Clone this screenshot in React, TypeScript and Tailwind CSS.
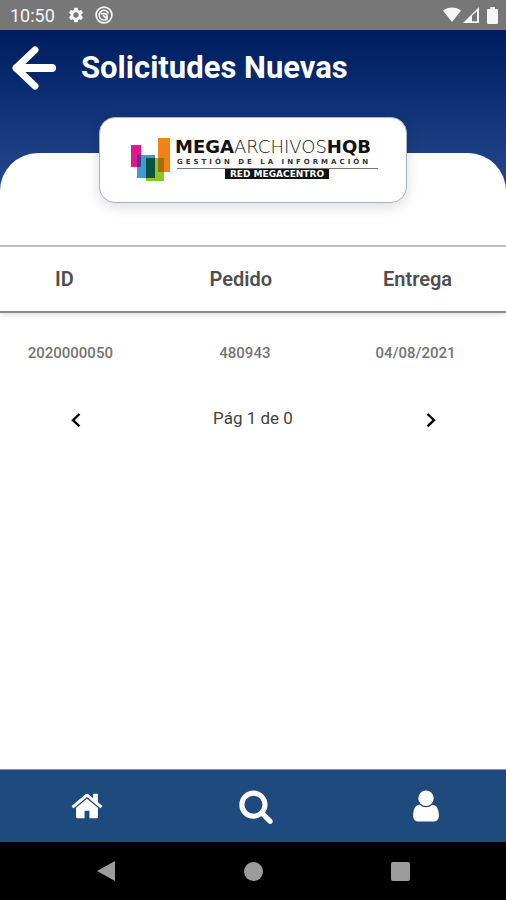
import React from "react";

const requests = [{ id: "2020000050", order: "480943", delivery: "04/08/2021" }];

function StatusBar() {
  return (
    <div className="flex h-[30px] items-center bg-[#777777] pl-2.5 pr-2 text-[#f6f6f6]">
      <span className="pt-0.5 text-[18px] leading-5">10:50</span>
      <svg className="ml-3 size-[18px]" viewBox="0 0 24 24" fill="currentColor" aria-hidden="true">
        <path d="M19.14 12.94c.04-.3.06-.61.06-.94 0-.32-.02-.64-.07-.94l2.03-1.58a.49.49 0 0 0 .12-.61l-1.92-3.32a.49.49 0 0 0-.59-.22l-2.39.96a7 7 0 0 0-1.62-.94l-.36-2.54a.48.48 0 0 0-.48-.41h-3.84a.47.47 0 0 0-.47.41l-.36 2.54c-.59.24-1.13.57-1.62.94l-2.39-.96a.48.48 0 0 0-.59.22L2.74 8.87a.47.47 0 0 0 .12.61l2.03 1.58c-.05.3-.09.63-.09.94s.02.64.07.94l-2.03 1.58a.49.49 0 0 0-.12.61l1.92 3.32c.12.22.37.29.59.22l2.39-.96c.5.38 1.03.7 1.62.94l.36 2.54c.05.24.24.41.48.41h3.84c.24 0 .44-.17.47-.41l.36-2.54a7 7 0 0 0 1.62-.94l2.39.96c.22.08.47 0 .59-.22l1.92-3.32a.47.47 0 0 0-.12-.61l-2.01-1.58zM12 15.6A3.61 3.61 0 0 1 8.4 12c0-1.98 1.62-3.6 3.6-3.6s3.6 1.62 3.6 3.6-1.62 3.6-3.6 3.6z" />
      </svg>
      <svg className="ml-2.5 size-[18px]" viewBox="0 0 18 18" fill="none" stroke="currentColor" aria-hidden="true">
        <circle cx="9" cy="9" r="7.9" strokeWidth="1.7" />
        <path d="M12.6 12.4A4.9 4.9 0 1 1 13.6 7.6" strokeWidth="1.5" />
        <path d="M5.6 7.6h4.2c1.4 0 2.2.8 2.2 2.4v2M8 9.4l4.6 3.6" strokeWidth="1.7" />
      </svg>
      <svg className="ml-auto h-4 w-[18px]" viewBox="0 0 18 16" fill="currentColor" aria-hidden="true">
        <path d="M0 3.6C5 -.4 13 -.4 18 3.6L9 15z" />
      </svg>
      <svg className="ml-0.5 h-4 w-4" viewBox="0 0 16 16" fill="currentColor" aria-hidden="true">
        <path fillRule="evenodd" d="M0 16L16 0v16zM9 8.8V14.2h5V4.2z" />
      </svg>
      <svg className="ml-2 h-[17px] w-[11px]" viewBox="0 0 11 17" fill="currentColor" aria-hidden="true">
        <path d="M3.2 0h4.6v2H10a1 1 0 0 1 1 1v13a1 1 0 0 1-1 1H1a1 1 0 0 1-1-1V3a1 1 0 0 1 1-1h2.2z" />
      </svg>
    </div>
  );
}

function CompanyLogo() {
  return (
    <svg
      className="h-[50px] w-[250px]"
      viewBox="0 0 250 50"
      role="img"
      aria-label="MEGAARCHIVOSHQB Gestión de la información, Red Megacentro"
    >
      <rect x="30" y="3" width="12" height="34" fill="#f08218" />
      <rect x="3" y="10" width="10" height="22" fill="#e6148c" />
      <rect x="9" y="20" width="18" height="23" fill="#3f9bd0" />
      <rect x="18" y="23" width="18" height="23" fill="#8cc629" />
      <rect x="9" y="20" width="4" height="12" fill="#4b3a93" />
      <rect x="18" y="23" width="9" height="20" fill="#0b5340" />
      <rect x="30" y="23" width="6" height="14" fill="#a36d10" />
      <text x="47" y="18" fontFamily="DejaVu Sans, sans-serif" fontSize="18" fill="#111111">
        <tspan fontWeight="700">MEGA</tspan>
        <tspan fontWeight="200">ARCHIVOS</tspan>
        <tspan fontWeight="700">HQB</tspan>
      </text>
      <text
        x="49"
        y="29"
        className="tracking-[3px]"
        fontFamily="DejaVu Sans, sans-serif"
        fontSize="7"
        fontWeight="700"
        fill="#333333"
      >
        GESTIÓN DE LA INFORMACIÓN
      </text>
      <rect x="49" y="33" width="201" height="1" fill="#777777" />
      <rect x="97" y="34" width="104" height="10" fill="#111111" />
      <text
        x="149"
        y="42"
        textAnchor="middle"
        fontFamily="DejaVu Sans, sans-serif"
        fontSize="9"
        fontWeight="700"
        fill="#ffffff"
      >
        RED MEGACENTRO
      </text>
    </svg>
  );
}

function Header() {
  return (
    <header className="flex h-40 items-start gap-6 bg-linear-to-b from-[#001c60] to-[#25488e] px-3 pt-4">
      <button type="button" aria-label="Volver" className="text-white">
        <svg className="h-11 w-[45px]" viewBox="0 0 45 44" fill="none" stroke="currentColor" aria-hidden="true">
          <path d="M23 4L4 22l19 18" strokeWidth="7" strokeLinecap="round" strokeLinejoin="round" />
          <path d="M5 22h35" strokeWidth="8" strokeLinecap="round" />
        </svg>
      </button>
      <h1 className="pt-1 text-[31px] leading-9 font-bold text-white">Solicitudes Nuevas</h1>
    </header>
  );
}

function RequestTable() {
  return (
    <table className="mt-[42px] w-full table-fixed border-collapse text-center">
      <thead className="text-[20px] leading-6 text-[#4f4f4f]">
        <tr className="h-[66px] border-t-2 border-b-2 border-t-[#bcbcbc] border-b-[#8c8c8c] shadow-[0_3px_5px_rgba(0,0,0,0.12)]">
          <th scope="col" className="w-[27%] pr-2 font-semibold">ID</th>
          <th scope="col" className="w-[42%] pr-1 font-semibold">Pedido</th>
          <th scope="col" className="pr-5 font-semibold">Entrega</th>
        </tr>
      </thead>
      <tbody className="text-[15px] leading-5 font-medium text-[#747474]">
        {requests.map((r) => (
          <tr key={r.id} className="h-20">
            <td className="pl-1">{r.id}</td>
            <td className="pl-1">{r.order}</td>
            <td className="pr-6">{r.delivery}</td>
          </tr>
        ))}
      </tbody>
    </table>
  );
}

function Pager() {
  return (
    <div className="flex items-center justify-between px-16 pt-3.5">
      <button type="button" aria-label="Página anterior" className="pt-1 text-black">
        <svg className="h-5 w-6" viewBox="0 0 24 20" fill="none" stroke="currentColor" strokeWidth="2.4" aria-hidden="true">
          <path d="M15.5 4L9 10.2l6.5 6.2" />
        </svg>
      </button>
      <span className="text-[17px] leading-6 text-[#424242]">Pág 1 de 0</span>
      <button type="button" aria-label="Página siguiente" className="pt-1 text-black">
        <svg className="h-5 w-6" viewBox="0 0 24 20" fill="none" stroke="currentColor" strokeWidth="2.4" aria-hidden="true">
          <path d="M9.5 4L16 10.2l-6.5 6.2" />
        </svg>
      </button>
    </div>
  );
}

function TabBar() {
  return (
    <nav className="flex h-[73px] items-center justify-between border-t border-[#7f97b8] bg-[#1f4a7d] pl-[70px] pr-[62px] text-white">
      <a href="#inicio" aria-label="Inicio">
        <svg className="size-[34px]" viewBox="0 0 1792 1792" fill="currentColor" aria-hidden="true">
          <path d="M1472 992v480q0 26-19 45t-45 19h-384v-384h-256v384h-384q-26 0-45-19t-19-45v-480q0-1 .5-3t.5-3l575-474 575 474q1 2 1 6zm223-69l-62 74q-8 9-21 11h-3q-13 0-21-7l-692-577-692 577q-12 8-24 7-13-2-21-11l-62-74q-8-10-7-23.5t11-21.5l719-599q32-26 76-26t76 26l244 204v-195q0-14 9-23t23-9h192q14 0 23 9t9 23v408l219 182q10 8 11 21.5t-7 23.5z" />
        </svg>
      </a>
      <a href="#buscar" aria-label="Buscar">
        <svg className="size-9" viewBox="0 0 1792 1792" fill="currentColor" aria-hidden="true">
          <path d="M1216 832q0-185-131.5-316.5t-316.5-131.5-316.5 131.5-131.5 316.5 131.5 316.5 316.5 131.5 316.5-131.5 131.5-316.5zm512 832q0 52-38 90t-90 38q-54 0-90-38l-343-342q-179 124-399 124-143 0-273.5-55.5t-225-150-150-225-55.5-273.5 55.5-273.5 150-225 225-150 273.5-55.5 273.5 55.5 225 150 150 225 55.5 273.5q0 220-124 399l343 343q37 37 37 90z" />
        </svg>
      </a>
      <a href="#perfil" aria-label="Perfil">
        <svg className="size-9" viewBox="0 0 1792 1792" fill="currentColor" aria-hidden="true">
          <path d="M1536 1399q0 109-62.5 187t-150.5 78h-854q-88 0-150.5-78t-62.5-187q0-85 8.5-160.5t31.5-152 58.5-131 94-89 134.5-34.5q131 128 313 128t313-128q76 0 134.5 34.5t94 89 58.5 131 31.5 152 8.5 160.5zm-256-887q0 159-112.5 271.5t-271.5 112.5-271.5-112.5-112.5-271.5 112.5-271.5 271.5-112.5 271.5 112.5 112.5 271.5z" />
        </svg>
      </a>
    </nav>
  );
}

function SystemNav() {
  return (
    <div className="flex h-[58px] items-center justify-between bg-black px-24 text-[#9c9c9c]">
      <button type="button" aria-label="Atrás">
        <svg className="size-5" viewBox="0 0 20 20" fill="currentColor" aria-hidden="true">
          <path d="M1 10L19 0v20z" />
        </svg>
      </button>
      <button type="button" aria-label="Pantalla de inicio" className="size-[19px] rounded-full bg-current" />
      <button type="button" aria-label="Aplicaciones recientes" className="size-[19px] rounded-xs bg-current" />
    </div>
  );
}

export default function App() {
  return (
    <div className="flex min-h-screen flex-col bg-white font-[Roboto,sans-serif]">
      <StatusBar />
      <Header />
      <main className="-mt-[37px] flex flex-1 flex-col rounded-t-[38px] bg-white">
        <div className="mx-auto -mt-9 flex h-[86px] w-[308px] items-center justify-center rounded-2xl border border-[#a9b2cc] bg-white shadow-[0_4px_14px_rgba(0,0,0,0.14)]">
          <CompanyLogo />
        </div>
        <RequestTable />
        <Pager />
      </main>
      <TabBar />
      <SystemNav />
    </div>
  );
}
